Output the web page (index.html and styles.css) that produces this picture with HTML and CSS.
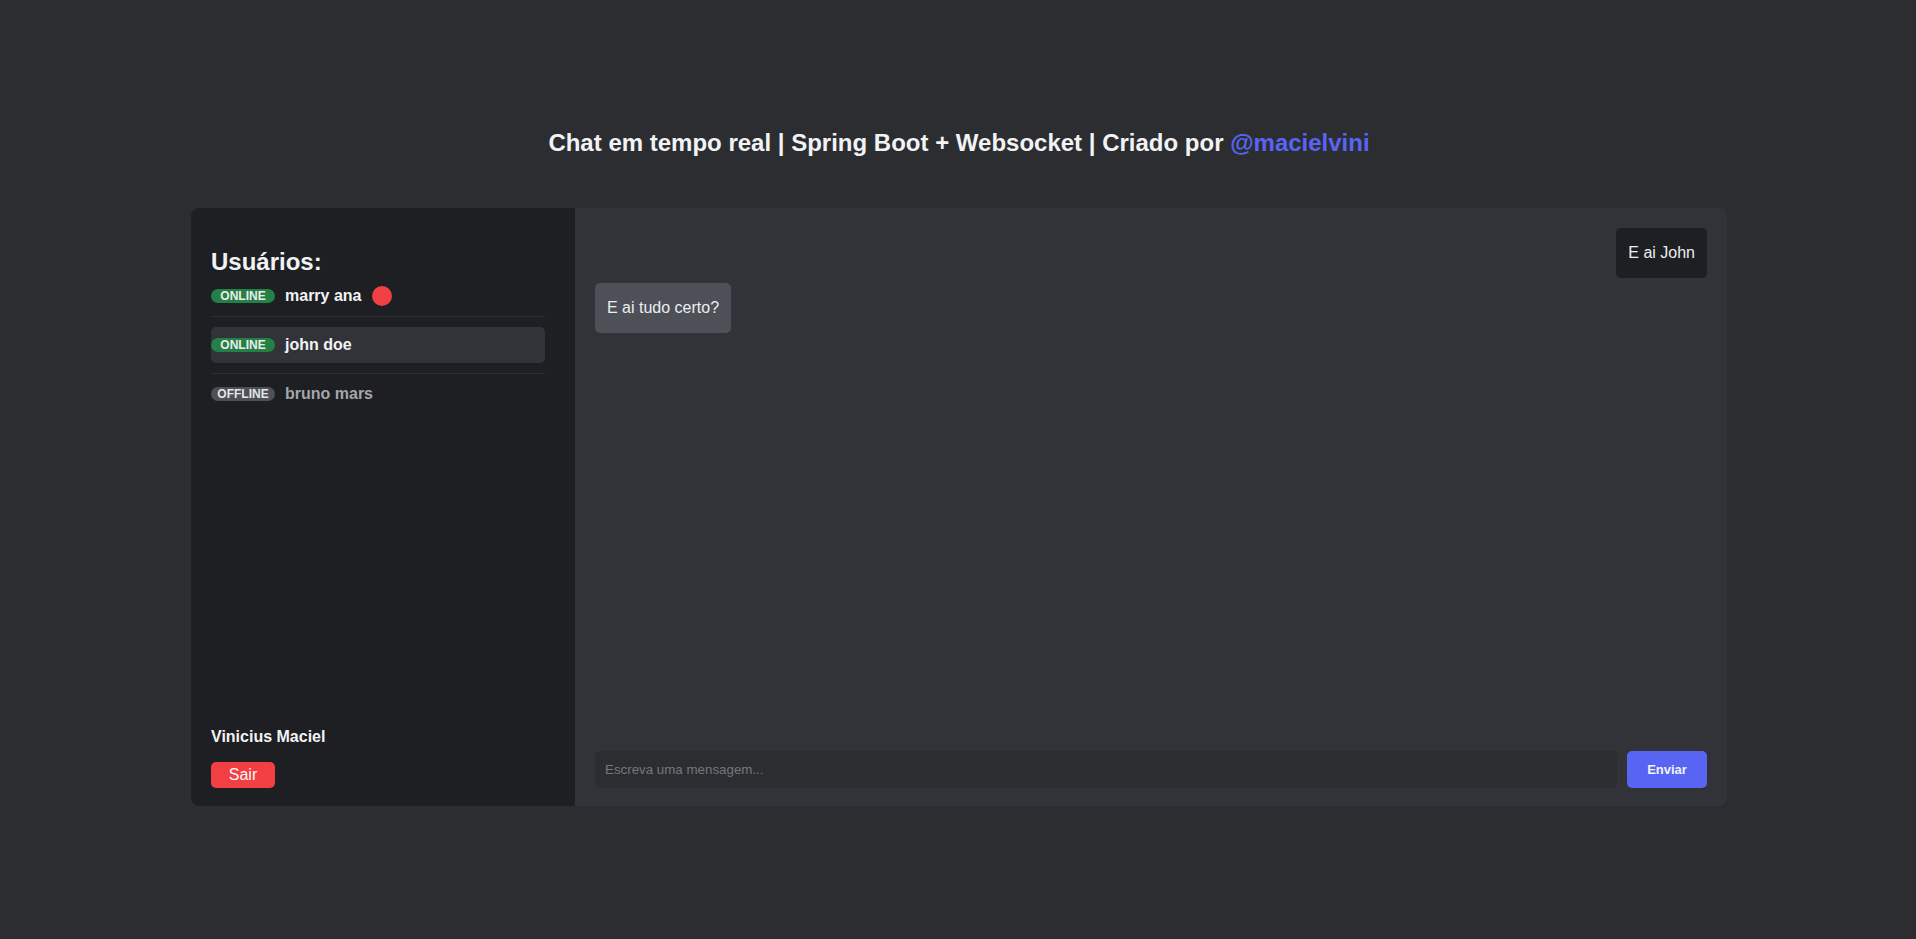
FILE: index.html
```html
<!DOCTYPE html>
<html lang="pt-BR">
<head>
<meta charset="utf-8">
<title>Chat em tempo real</title>
<link rel="stylesheet" href="styles.css">
</head>
<body>
<div class="page">
  <h1 class="title">Chat em tempo real | Spring Boot + Websocket | Criado por <a class="title-link" href="#">@macielvini</a></h1>
  <div class="chat-container">
    <aside class="sidebar">
      <div class="users">
        <h2 class="users-title">Usuários:</h2>
        <ul class="user-list">
          <li class="user-row">
            <span class="badge badge-online">ONLINE</span>
            <span class="user-name">marry ana</span>
            <span class="unread-dot"></span>
          </li>
          <li class="separator"></li>
          <li class="user-row user-row-selected">
            <span class="badge badge-online">ONLINE</span>
            <span class="user-name">john doe</span>
          </li>
          <li class="separator"></li>
          <li class="user-row">
            <span class="badge badge-offline">OFFLINE</span>
            <span class="user-name user-name-offline">bruno mars</span>
          </li>
        </ul>
      </div>
      <div class="me">
        <div class="me-name">Vinicius Maciel</div>
        <button class="logout-btn">Sair</button>
      </div>
    </aside>
    <main class="chat">
      <div class="messages">
        <div class="bubble bubble-sent">E ai John</div>
        <div class="bubble bubble-received">E ai tudo certo?</div>
      </div>
      <form class="composer" onsubmit="return false;">
        <input class="composer-input" type="text" placeholder="Escreva uma mensagem...">
        <button class="send-btn" type="submit">Enviar</button>
      </form>
    </main>
  </div>
</div>
</body>
</html>
```

FILE: styles.css
```css
* {
  box-sizing: border-box;
}

html, body {
  margin: 0;
  padding: 0;
}

body {
  background: #2b2d31;
  font-family: "Liberation Sans", Arial, sans-serif;
  color: #f2f3f5;
  height: 939px;
  overflow: hidden;
}

.page {
  display: flex;
  flex-direction: column;
  align-items: center;
  padding-top: 129px;
  padding-left: 2px;
}

.title {
  margin: 0 0 51px 0;
  font-size: 24px;
  line-height: 28px;
  font-weight: bold;
  color: #f2f3f5;
  text-align: center;
}

.title-link {
  color: #5865f2;
  text-decoration: none;
}

.chat-container {
  width: 1536px;
  height: 598px;
  display: flex;
  border-radius: 8px;
  overflow: hidden;
}

.sidebar {
  width: 384px;
  flex: 0 0 384px;
  background: #1e1f22;
  padding: 20px 30px 18px 20px;
  display: flex;
  flex-direction: column;
  justify-content: space-between;
}

.users-title {
  margin: 20px 0 10px 0;
  font-size: 24px;
  line-height: 27.6px;
  font-weight: bold;
  color: #f2f3f5;
}

.user-list {
  list-style: none;
  margin: 0;
  padding: 0;
}

.user-row {
  display: flex;
  align-items: center;
  min-height: 20px;
}

.user-row-selected {
  background: #313338;
  border-radius: 5px;
  padding: 9px 0;
}

.separator {
  height: 1px;
  background: #2e3035;
  margin: 10px 0;
}

.badge {
  display: inline-block;
  width: 64px;
  height: 14px;
  line-height: 14px;
  border-radius: 7px;
  font-size: 12px;
  font-weight: bold;
  text-align: center;
  color: #e9ece9;
}

.badge-online {
  background: #248046;
}

.badge-offline {
  background: #4e5058;
  color: #e3e5e8;
}

.user-name {
  margin-left: 10px;
  font-size: 16px;
  font-weight: bold;
  color: #f2f3f5;
}

.user-name-offline {
  color: #a3a6ab;
}

.unread-dot {
  width: 20px;
  height: 20px;
  border-radius: 50%;
  background: #f23f43;
  margin-left: 10px;
}

.me {
  display: flex;
  flex-direction: column;
  align-items: flex-start;
}

.me-name {
  font-size: 16px;
  line-height: 18px;
  font-weight: bold;
  color: #f2f3f5;
  margin-bottom: 16px;
}

.logout-btn {
  width: 64px;
  height: 26px;
  border: none;
  border-radius: 5px;
  background: #f23f43;
  color: #f8f8f8;
  font-family: "Liberation Sans", Arial, sans-serif;
  font-size: 16px;
  padding: 0;
}

.chat {
  flex: 1;
  background: #313338;
  padding: 20px 20px 18px 20px;
  display: flex;
  flex-direction: column;
}

.messages {
  flex: 1;
  display: flex;
  flex-direction: column;
  gap: 5px;
}

.bubble {
  padding: 16px 12px;
  border-radius: 5px;
  font-size: 16px;
  line-height: 18px;
  color: #eceef0;
  max-width: 60%;
}

.bubble-sent {
  align-self: flex-end;
  background: #1e1f22;
}

.bubble-received {
  align-self: flex-start;
  background: #4e5058;
}

.composer {
  display: flex;
  gap: 10px;
  margin: 0;
}

.composer-input {
  flex: 1;
  height: 37px;
  background: #2b2d31;
  border: none;
  border-radius: 5px;
  padding: 0 10px;
  font-family: "Liberation Sans", Arial, sans-serif;
  font-size: 13.333px;
  color: #dbdee1;
  outline: none;
}

.composer-input::placeholder {
  color: #74777d;
}

.send-btn {
  width: 80px;
  height: 37px;
  border: none;
  border-radius: 5px;
  background: #5865f2;
  color: #f2f3f5;
  font-family: "Liberation Sans", Arial, sans-serif;
  font-size: 13px;
  font-weight: bold;
  padding: 0;
}
```
